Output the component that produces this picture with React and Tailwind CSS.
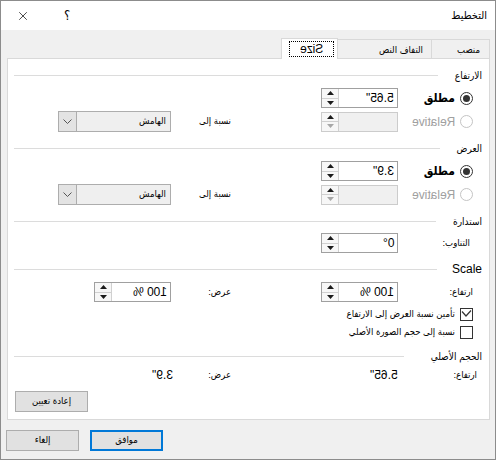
import { X } from "lucide-react";

const Tri = ({ down, muted }) => (
  <svg width="7" height="4" viewBox="0 0 7 4" className={down ? "rotate-180" : ""}>
    <path d="M0 4 L3.5 0 L7 4 Z" fill={muted ? "#a8a8a8" : "#1a1a1a"} />
  </svg>
);

const Mirror = ({ children, className = "" }) => (
  <span dir="ltr" className={`inline-block -scale-x-100 ${className}`}>
    {children}
  </span>
);

const Spinner = ({ value, disabled, w = "w-[77px]" }) => (
  <div
    className={`${w} h-[20px] flex border ${
      disabled ? "border-[#cccccc] bg-[#f0f0f0]" : "border-[#a0a0a0] bg-white"
    }`}
  >
    <div className="flex-1 flex items-center justify-start pr-[3px] text-[12px]">
      {value && <Mirror>{value}</Mirror>}
    </div>
    <div className="w-[17px] flex flex-col border-r border-[#d0d0d0] bg-[#f7f7f7]">
      <div className="flex-1 flex items-center justify-center border-b border-[#d0d0d0]">
        <Tri />
      </div>
      <div className="flex-1 flex items-center justify-center">
        <Tri down muted={disabled} />
      </div>
    </div>
  </div>
);

const Dropdown = () => (
  <div className="w-[113px] h-[21px] flex border border-[#adadad] bg-[#efefef]">
    <div className="flex-1 flex items-center pr-[4px] text-[9.5px]">الهامش</div>
    <div className="w-[18px] flex items-center justify-center border-r border-[#adadad] bg-[#e3e3e3]">
      <svg width="9" height="5" viewBox="0 0 9 5">
        <path d="M0.5 0.5 L4.5 4.5 L8.5 0.5" fill="none" stroke="#555" strokeWidth="1" />
      </svg>
    </div>
  </div>
);

const Radio = ({ checked, disabled }) => (
  <div
    className={`w-[13px] h-[13px] rounded-full border flex items-center justify-center bg-white ${
      disabled ? "border-[#c4c4c4]" : "border-[#333333]"
    }`}
  >
    {checked && <div className="w-[7px] h-[7px] rounded-full bg-[#333333]" />}
  </div>
);

const Check = ({ checked, label }) => (
  <div className="flex items-center h-[14px] pr-[16px] gap-[5px] text-[9.5px]">
    <div className="w-[13px] h-[13px] border border-[#333333] bg-white flex items-center justify-center">
      {checked && (
        <svg width="11" height="8" viewBox="0 0 11 8">
          <path d="M1 1.5 L5 6 L10 0.5" fill="none" stroke="#333" strokeWidth="1.2" />
        </svg>
      )}
    </div>
    <span>{label}</span>
  </div>
);

const Header = ({ label, lineGap = "mr-[17px]", children }) => (
  <div className="flex items-center h-[16px] pr-[7px] pl-[6px]">
    <span className="text-[10px]">{children || label}</span>
    <div className={`flex-1 h-px bg-[#dcdcdc] ${lineGap}`} />
  </div>
);

const SizeBlock = ({ value }) => (
  <>
    <div className="flex items-center h-[20px] mt-[5px]">
      <div className="w-[91px] flex items-center pr-[16px] gap-[5px]">
        <Radio checked />
        <span className="text-[12px] font-bold">مطلق</span>
      </div>
      <Spinner value={value} />
    </div>
    <div className="flex items-center h-[21px] mt-[3px]">
      <div className="w-[91px] flex items-center pr-[16px] gap-[5px]">
        <Radio disabled />
        <Mirror className="text-[12px] text-[#a0a0a0]">Relative</Mirror>
      </div>
      <Spinner disabled />
      <div className="w-[90px]" />
      <div className="w-[60px] text-[9.5px]">نسبة إلى</div>
      <Dropdown />
    </div>
  </>
);

export default function App() {
  return (
    <div
      dir="rtl"
      className="w-[496px] h-[460px] border border-[#8c8c8c] bg-[#f0f0f0] flex flex-col overflow-hidden text-black font-['Liberation_Sans','DejaVu_Sans_Condensed','DejaVu_Sans',sans-serif]"
    >
      {/* title bar */}
      <div className="h-[29px] bg-white flex items-center shrink-0">
        <span className="pr-[8px] text-[11px]">التخطيط</span>
        <div className="ms-auto flex items-center gap-[34px] pl-[15px]">
          <span className="text-[13px]">؟</span>
          <X size={14} strokeWidth={1.2} />
        </div>
      </div>

      {/* tabs */}
      <div className="h-[28px] flex items-end mr-[5px] shrink-0">
        <div className="w-[59px] h-[19px] border-t border-l border-r border-[#d9d9d9] flex items-center pr-[9px] pt-[2px] text-[9.5px]">
          منصب
        </div>
        <div className="w-[93px] h-[19px] border-t border-[#d9d9d9] flex items-center pr-[8px] pt-[2px] text-[9.5px]">
          التفاف النص
        </div>
        <div className="w-[57px] h-[21px] bg-white border border-b-0 border-[#d9d9d9] relative z-10 mb-[-1px] flex justify-end pl-[7px]">
          <div className="w-[45px] h-[16px] mt-[2px] border border-dotted border-black flex items-center justify-center">
            <Mirror className="text-[12px]">Size</Mirror>
          </div>
        </div>
      </div>

      {/* panel */}
      <div className="h-[362px] ml-[6px] mr-[5px] border border-[#d9d9d9] bg-white flex flex-col pt-[8px] shrink-0">
        <Header label="الارتفاع" />
        <SizeBlock value={'5.65"'} />

        <div className="mt-[8px]">
          <Header label="العرض" />
        </div>
        <SizeBlock value={'3.9"'} />

        <div className="mt-[8px]">
          <Header label="استدارة" />
        </div>
        <div className="flex items-center h-[20px] mt-[4px]">
          <div className="w-[91px] pr-[19px] text-[9.5px]">التناوب:</div>
          <Spinner value="0°" />
        </div>

        <div className="mt-[8px]">
          <Header lineGap="mr-[15px]">
            <span className="text-[12px]" dir="ltr">Scale</span>
          </Header>
        </div>
        <div className="flex items-center h-[20px] mt-[5px]">
          <div className="w-[91px] pr-[16px] text-[9.5px]">ارتفاع:</div>
          <Spinner value="100 %" />
          <div className="w-[90px]" />
          <div className="w-[60px] text-[9.5px]">عرض:</div>
          <Spinner value="100 %" />
        </div>

        <div className="mt-[5px]">
          <Check checked label="تأمين نسبة العرض إلى الارتفاع" />
        </div>
        <div className="mt-[4px]">
          <Check label="نسبة إلى حجم الصورة الأصلي" />
        </div>

        <div className="mt-[9px]">
          <Header label="الحجم الأصلي" lineGap="mr-[27px]" />
        </div>
        <div className="flex items-center h-[16px] mt-[3px]">
          <div className="w-[91px] pr-[12px] text-[9.5px]">ارتفاع:</div>
          <div className="w-[77px] flex justify-start text-[12px]">
            <Mirror>5.65"</Mirror>
          </div>
          <div className="w-[90px]" />
          <div className="w-[58px] text-[9.5px]">عرض:</div>
          <div className="flex justify-start text-[12px]">
            <Mirror>3.9"</Mirror>
          </div>
        </div>

        <div className="flex justify-end pl-[7px] mt-[8px]">
          <button className="w-[73px] h-[21px] bg-[#e1e1e1] border border-[#adadad] text-[9.5px] flex items-center justify-center">
            إعادة تعيين
          </button>
        </div>
      </div>

      {/* footer buttons */}
      <div className="flex justify-end gap-[11px] pl-[5px] mt-[10px]">
        <button className="w-[73px] h-[21px] bg-[#e1e1e1] border-2 border-[#0078d7] text-[9.5px] flex items-center justify-center">
          موافق
        </button>
        <button className="w-[73px] h-[21px] bg-[#e1e1e1] border border-[#adadad] text-[9.5px] flex items-center justify-center">
          إلغاء
        </button>
      </div>
    </div>
  );
}
